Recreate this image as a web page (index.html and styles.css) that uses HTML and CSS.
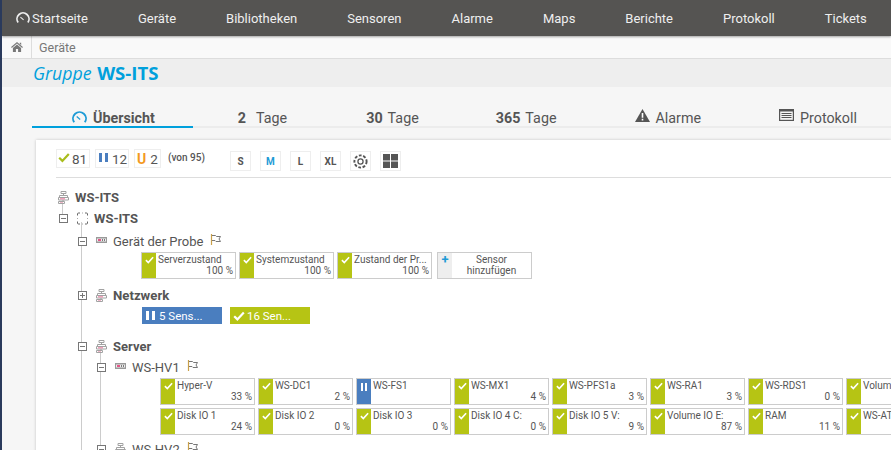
FILE: index.html
```html
<!DOCTYPE html>
<html lang="de">
<head>
<meta charset="utf-8">
<title>Gruppe WS-ITS</title>
<link rel="stylesheet" href="styles.css">
</head>
<body>
<svg class="defs" width="0" height="0" aria-hidden="true">
  <defs>
    <symbol id="gauge" viewBox="0 0 16 14"><path d="M2.300 12.200A7 7 0 1 1 13.700 12.200" fill="none" stroke="currentColor" stroke-width="2"/><path d="M5 6l3.700 3.200" stroke="currentColor" stroke-width="1.300"/></symbol>
    <symbol id="check" viewBox="0 0 12 10"><path d="M1.200 5.200l3.200 3.200 6.400-7" fill="none" stroke="currentColor" stroke-width="2.200"/></symbol>
    <symbol id="group" viewBox="0 0 11 13"><path d="M3 .5h5v2H3zM5.500 2.500v2M1.500 6V4.500h8V6M.5 6.500h10v2.500H.5zM.5 10.500h6v2h-6zM5 9v1.500" fill="none" stroke="#a2a2a2" stroke-width="1"/><path d="M2 7.200h5v1.200H2z" fill="#ee8cab"/><path d="M2 11h3v1H2z" fill="#f0b8ca"/></symbol>
    <symbol id="probe" viewBox="0 0 11 12"><path d="M.5 3V1.500a1 1 0 0 1 1-1H3M8 .5h1.500a1 1 0 0 1 1 1V3M10.500 9v1.500a1 1 0 0 1-1 1H8M3 11.500H1.500a1 1 0 0 1-1-1V9" fill="none" stroke="#666"/><path d="M5 .5h1M5 11.500h1M.5 5.500v1M10.500 5.500v1" stroke="#aaa"/></symbol>
    <symbol id="device" viewBox="0 0 11 6"><path d="M0 0h11v6H0z" fill="#9a9a9a"/><path d="M1 1.500h9v3H1z" fill="#eee"/><path d="M2 2.200h3v1.600H2z" fill="#e0306f"/><path d="M6 2.200h1v1.600H6zM8 2.200h1v1.600H8z" fill="#555"/></symbol>
    <symbol id="flag" viewBox="0 0 11 11"><path d="M1.500 0v11" stroke="#c9a04a" stroke-width="1.200"/><path d="M2 1.500h3.500l1 1h4l-1.500 2.500 1.500 2.500H6l-1-1H2" fill="none" stroke="#777"/></symbol>
  </defs>
</svg>

<header class="topbar">
  <nav class="nav">
    <a class="nav-item nav-home"><svg class="nav-gauge"><use href="#gauge"/></svg>Startseite</a>
    <a class="nav-item">Geräte</a>
    <a class="nav-item">Bibliotheken</a>
    <a class="nav-item">Sensoren</a>
    <a class="nav-item">Alarme</a>
    <a class="nav-item">Maps</a>
    <a class="nav-item">Berichte</a>
    <a class="nav-item">Protokoll</a>
    <a class="nav-item">Tickets</a>
  </nav>
</header>

<div class="crumbs">
  <span class="crumb-home"><svg width="12" height="10" viewBox="0 0 13 11"><path d="M6.500 0L13 5.600l-.8.900-5.700-4.800L.8 6.500 0 5.600zM2 6.500l4.500-3.800L11 6.500V11H7.700V7.700H5.300V11H2zM9.500 .8h1.600v2.400L9.500 1.900z" fill="#777"/></svg></span>
  <span class="crumb">Geräte</span>
</div>

<h1 class="title"><em>Gruppe</em> <strong>WS-ITS</strong></h1>

<div class="tabs">
  <a class="tab tab-active"><svg class="tab-gauge"><use href="#gauge"/></svg><b>Übersicht</b></a>
  <a class="tab tab-two"><b>2</b>Tage</a>
  <a class="tab tab-month"><b>30</b>Tage</a>
  <a class="tab tab-year"><b>365</b>Tage</a>
  <a class="tab tab-alarm"><svg class="tab-icon" width="15" height="13" viewBox="0 0 15 13"><path d="M7.500 0L15 13H0z" fill="#555"/><path d="M6.700 4h1.600v4.800H6.700zM6.700 9.800h1.600v1.600H6.700z" fill="#fff"/></svg>Alarme</a>
  <a class="tab"><svg class="tab-icon" width="15" height="12" viewBox="0 0 15 12"><path d="M0 0h15v12H0z" fill="#555"/><path d="M1.200 2.500h12.600v8.300H1.200z" fill="#f4f4f4"/><path d="M2.500 4h10v1h-10zM2.500 6h10v1h-10zM2.500 8h10v1h-10z" fill="#555"/></svg>Protokoll</a>
</div>

<main class="panel">
  <div class="toolbar">
    <span class="count count-ok"><svg class="count-check"><use href="#check"/></svg>81</span>
    <span class="count count-paused"><i class="pause pause-blue"></i>12</span>
    <span class="count count-unknown"><b>U</b>2</span>
    <span class="total">(von 95)</span>
    <span class="sizes">
      <button class="size">S</button>
      <button class="size size-on">M</button>
      <button class="size">L</button>
      <button class="size">XL</button>
      <button class="size"><svg width="15" height="15" viewBox="0 0 14 14"><circle cx="7" cy="7" r="5.700" fill="none" stroke="#555" stroke-width="1.800" stroke-dasharray="2.600 1.500"/><circle cx="7" cy="7" r="2.400" fill="none" stroke="#555" stroke-width="1.200"/></svg></button>
      <button class="size"><svg width="15" height="14" viewBox="0 0 15 14"><path d="M0 0h7v6.500H0zM8 0h7v6.500H8zM0 7.500h7V14H0zM8 7.500h7V14H8z" fill="#555"/></svg></button>
    </span>
  </div>

  <div class="tree">
    <div class="row row-root"><svg class="ico"><use href="#group"/></svg><b class="strong">WS-ITS</b></div>
    <div class="row row-probe"><span class="toggle toggle-stub minus"></span><svg class="ico ico-tall"><use href="#probe"/></svg><b class="strong">WS-ITS</b></div>
    <div class="branch">
      <div class="row"><span class="toggle minus"></span><svg class="ico ico-dev"><use href="#device"/></svg><span>Gerät der Probe</span><svg class="flag"><use href="#flag"/></svg></div>
      <div class="tiles tiles-probe">
        <div class="tile"><span class="side"><svg class="chk"><use href="#check"/></svg></span><div class="body"><span class="name">Serverzustand</span><span class="pct">100 %</span></div></div>
        <div class="tile"><span class="side"><svg class="chk"><use href="#check"/></svg></span><div class="body"><span class="name">Systemzustand</span><span class="pct">100 %</span></div></div>
        <div class="tile"><span class="side"><svg class="chk"><use href="#check"/></svg></span><div class="body"><span class="name">Zustand der Pr...</span><span class="pct">100 %</span></div></div>
        <div class="tile tile-add"><span class="side side-add">+</span><div class="add-label">Sensor hinzufügen</div></div>
      </div>

      <div class="row row-net"><span class="toggle plus"></span><svg class="ico ico-tall"><use href="#group"/></svg><b class="medium medium-net">Netzwerk</b></div>
      <div class="bars">
        <span class="bar bar-blue"><i class="pause"></i>5 Sens...</span>
        <span class="bar bar-green"><svg class="bar-check"><use href="#check"/></svg>16 Sen...</span>
      </div>

      <div class="row row-server"><span class="toggle minus"></span><svg class="ico ico-tall"><use href="#group"/></svg><b class="medium">Server</b></div>
      <div class="branch">
        <div class="row"><span class="toggle minus"></span><svg class="ico ico-dev"><use href="#device"/></svg><span>WS-HV1</span><svg class="flag"><use href="#flag"/></svg></div>
        <div class="tiles">
          <div class="tile"><span class="side"><svg class="chk"><use href="#check"/></svg></span><div class="body"><span class="name">Hyper-V</span><span class="pct">33 %</span></div></div>
          <div class="tile"><span class="side"><svg class="chk"><use href="#check"/></svg></span><div class="body"><span class="name">WS-DC1</span><span class="pct">2 %</span></div></div>
          <div class="tile"><span class="side side-blue"><i class="pause pause-small"></i></span><div class="body"><span class="name">WS-FS1</span></div></div>
          <div class="tile"><span class="side"><svg class="chk"><use href="#check"/></svg></span><div class="body"><span class="name">WS-MX1</span><span class="pct">4 %</span></div></div>
          <div class="tile"><span class="side"><svg class="chk"><use href="#check"/></svg></span><div class="body"><span class="name">WS-PFS1a</span><span class="pct">3 %</span></div></div>
          <div class="tile"><span class="side"><svg class="chk"><use href="#check"/></svg></span><div class="body"><span class="name">WS-RA1</span><span class="pct">3 %</span></div></div>
          <div class="tile"><span class="side"><svg class="chk"><use href="#check"/></svg></span><div class="body"><span class="name">WS-RDS1</span><span class="pct">0 %</span></div></div>
          <div class="tile"><span class="side"><svg class="chk"><use href="#check"/></svg></span><div class="body"><span class="name">Volume IO C:</span><span class="pct">5 %</span></div></div>
        </div>
        <div class="tiles tiles-second">
          <div class="tile"><span class="side"><svg class="chk"><use href="#check"/></svg></span><div class="body"><span class="name">Disk IO 1</span><span class="pct">24 %</span></div></div>
          <div class="tile"><span class="side"><svg class="chk"><use href="#check"/></svg></span><div class="body"><span class="name">Disk IO 2</span><span class="pct">0 %</span></div></div>
          <div class="tile"><span class="side"><svg class="chk"><use href="#check"/></svg></span><div class="body"><span class="name">Disk IO 3</span><span class="pct">0 %</span></div></div>
          <div class="tile"><span class="side"><svg class="chk"><use href="#check"/></svg></span><div class="body"><span class="name">Disk IO 4 C:</span><span class="pct">0 %</span></div></div>
          <div class="tile"><span class="side"><svg class="chk"><use href="#check"/></svg></span><div class="body"><span class="name">Disk IO 5 V:</span><span class="pct">9 %</span></div></div>
          <div class="tile"><span class="side"><svg class="chk"><use href="#check"/></svg></span><div class="body"><span class="name">Volume IO E:</span><span class="pct">87 %</span></div></div>
          <div class="tile"><span class="side"><svg class="chk"><use href="#check"/></svg></span><div class="body"><span class="name">RAM</span><span class="pct">11 %</span></div></div>
          <div class="tile"><span class="side"><svg class="chk"><use href="#check"/></svg></span><div class="body"><span class="name">WS-ATS1</span><span class="pct">1 %</span></div></div>
        </div>
        <div class="row row-next"><span class="toggle minus"></span><svg class="ico ico-tall"><use href="#group"/></svg><span>WS-HV2</span><svg class="flag"><use href="#flag"/></svg></div>
      </div>
    </div>
  </div>
</main>
</body>
</html>
```

FILE: styles.css
```css
* { box-sizing: border-box; }
html, body { margin: 0; height: 450px; overflow: hidden; }
body {
  border-left: 2px solid #2a3a5c;
  background: #f6f6f6;
  font-family: Roboto, "Liberation Sans", sans-serif;
  font-size: 13px;
  color: #555;
}
.defs { position: absolute; }
svg { display: block; flex: none; }

.topbar { height: 36px; background: #555452; box-shadow: 0 1px 2px rgba(0,0,0,.35); position: relative; }
.nav { display: flex; height: 36px; align-items: center; padding-left: 14px; }
.nav-item { color: #efefef; font-size: 13px; margin-right: 50px; white-space: nowrap; }
.nav-home { display: flex; align-items: center; }
.nav-gauge { width: 14px; height: 12px; margin-right: 2px; color: #eee; }

.crumbs { height: 23px; display: flex; align-items: center; background: #f9f9f9; border-bottom: 1px solid #ddd; }
.crumb-home { width: 30px; height: 22px; display: flex; align-items: center; justify-content: center; border-right: 1px solid #ddd; }
.crumb { margin-left: 7px; color: #777; font-size: 12.500px; }

.title { margin: 0; height: 28px; padding-left: 31px; background: #eeeeee; color: #00a0dc; font-family: "Open Sans", sans-serif; font-size: 18px; font-weight: 400; line-height: 28px; white-space: nowrap; }
.title em { font-style: italic; font-size: 17.700px; }
.title strong { font-weight: 700; font-size: 18.600px; margin-left: 1px; }

.tabs { display: flex; margin: 18px 0 0 30px; height: 23px; border-bottom: 2px solid #ececec; white-space: nowrap; }
.tab { display: flex; align-items: flex-start; padding: 4px 38px 0 40px; height: 23px; font-size: 14.300px; color: #555; line-height: 19px; }
.tab b { font-weight: 700; margin-right: 5px; }
.tab-active { border-bottom: 2px solid #00a0dc; padding-right: 38px; }
.tab-active b { margin-right: 0; }
.tab-two { margin-left: 5px; }
.tab-two b { margin-right: 10px; }
.tab-month { margin-left: 1px; }
.tab-year { margin-left: -1px; }
.tab-alarm { margin-left: 0; }
.tab-gauge { width: 15px; height: 13px; margin: 2px 6px 0 0; color: #1e9bd6; }
.tab-icon { margin-right: 6px; }

.panel { margin: 12px 0 0 34px; background: #fff; box-shadow: 0 0 3px rgba(0,0,0,.2); padding: 9px 0 0 20px; height: 320px; }
.toolbar { display: flex; align-items: flex-start; height: 29px; border-bottom: 1px solid #ddd; }
.count { display: flex; align-items: center; height: 19px; border: 1px solid #eee; padding: 0 0 0 1px; font-size: 13.500px; margin-right: 5px; }
.count-ok { width: 34px; }
.count-paused { width: 34px; padding-left: 3px; }
.count-unknown { width: 27px; margin-right: 6px; padding-left: 2px; }
.count-check { width: 12px; height: 11px; color: #a9bd1c; margin-right: 2px; margin-top: -2px; }
.count-unknown b { color: #f39a1f; font-size: 14px; margin-right: 4px; }
.pause { display: block; flex: none; width: 9px; height: 9px; border-left: 3px solid #fff; border-right: 3px solid #fff; }
.pause-blue { border-color: #4a7ebf; margin-right: 4px; margin-top: -2px; }
.pause-small { width: 6px; height: 8px; border-left-width: 2px; border-right-width: 2px; margin: 4px auto 0; }
.total { flex: none; width: 38px; font-size: 10px; font-weight: 500; margin: 3px 0 0 1px; white-space: nowrap; }
.sizes { display: flex; gap: 9px; margin: 2px 0 0 24px; }
.size { width: 21px; height: 20px; padding: 0; display: flex; align-items: center; justify-content: center; background: #fff; border: 1px solid #eee; color: #555; font: 700 10px Roboto, sans-serif; }
.size-on { color: #1e9bd6; }

.tree { padding: 9px 0 0 2px; width: 900px; }
.row { display: flex; align-items: center; height: 20px; white-space: nowrap; font-size: 13px; color: #555; position: relative; }
.row-root { margin-bottom: 1px; }
.ico { width: 11px; height: 13px; margin-right: 6px; }
.ico-tall { height: 13px; }
.ico-dev { height: 6px; margin-top: -2px; }
.flag { width: 11px; height: 11px; margin: -3px 0 0 7px; }
.strong { font-weight: 700; }
.medium { font-weight: 700; font-size: 13px; }
.medium-net { font-size: 13.200px; }

.toggle { flex: none; width: 9px; height: 9px; border: 1px solid #777; background: #fff; margin-right: 9px; position: relative; }
.toggle::after { content: ""; position: absolute; left: 1px; right: 1px; top: 3px; height: 1px; background: #777; }
.plus::before { content: ""; position: absolute; top: 1px; bottom: 1px; left: 3px; width: 1px; background: #777; }
.toggle-stub { margin-left: 1px; }
.toggle-stub::before { content: ""; position: absolute; left: 2px; top: -11px; width: 1px; height: 10px; background: #ccc; }

.branch { margin: -6px 0 0 23px; padding-top: 9px; border-left: 1px solid #ccc; }
.branch > .row, .branch > .tiles, .branch > .bars { margin-left: -4px; }
.branch > .branch { margin: -5px 0 0 18px; padding-top: 6px; }

.tiles { display: flex; gap: 3px; margin-top: 1px; padding-left: 63px; }
.tiles-second { margin-top: 3px; }
.tile { flex: none; width: 95px; height: 27px; display: flex; border: 1px solid #ccc; background: #fff; font-size: 10px; line-height: 11px; color: #555; }
.tile-add { margin-left: 2px; }
.side { flex: none; width: 14px; margin-right: 2px; background: #b6c414; color: #fff; }
.side-blue { background: #4a7ebf; }
.chk { width: 9px; height: 8px; margin: 3px 0 0 2.500px; }
.body { flex: 1; min-width: 0; display: flex; flex-direction: column; padding: 1px 2px 0 0; }
.name { white-space: nowrap; overflow: hidden; }
.pct { text-align: right; }
.side-add { background: #eee; color: #1e9bd6; font-weight: 700; font-size: 13px; line-height: 13px; text-align: center; }
.add-label { flex: 1; text-align: center; padding: 1px 8px 0 6px; font-size: 10px; }

.row-net { margin-top: 6px; }
.bars { display: flex; gap: 8px; padding-left: 64px; margin-top: 2px; }
.bar { width: 80px; height: 17px; display: flex; align-items: center; color: #fff; font-size: 11.500px; padding-left: 4px; white-space: nowrap; }
.bar .pause { margin-right: 4px; }
.bar-blue { background: #4a7ebf; }
.bar-green { background: #b6c414; padding-left: 3px; }
.bar-check { width: 12px; height: 10px; margin-right: 2px; }
.row-server { margin-top: 12px; }
.row-next { margin-top: 4px; }
```
